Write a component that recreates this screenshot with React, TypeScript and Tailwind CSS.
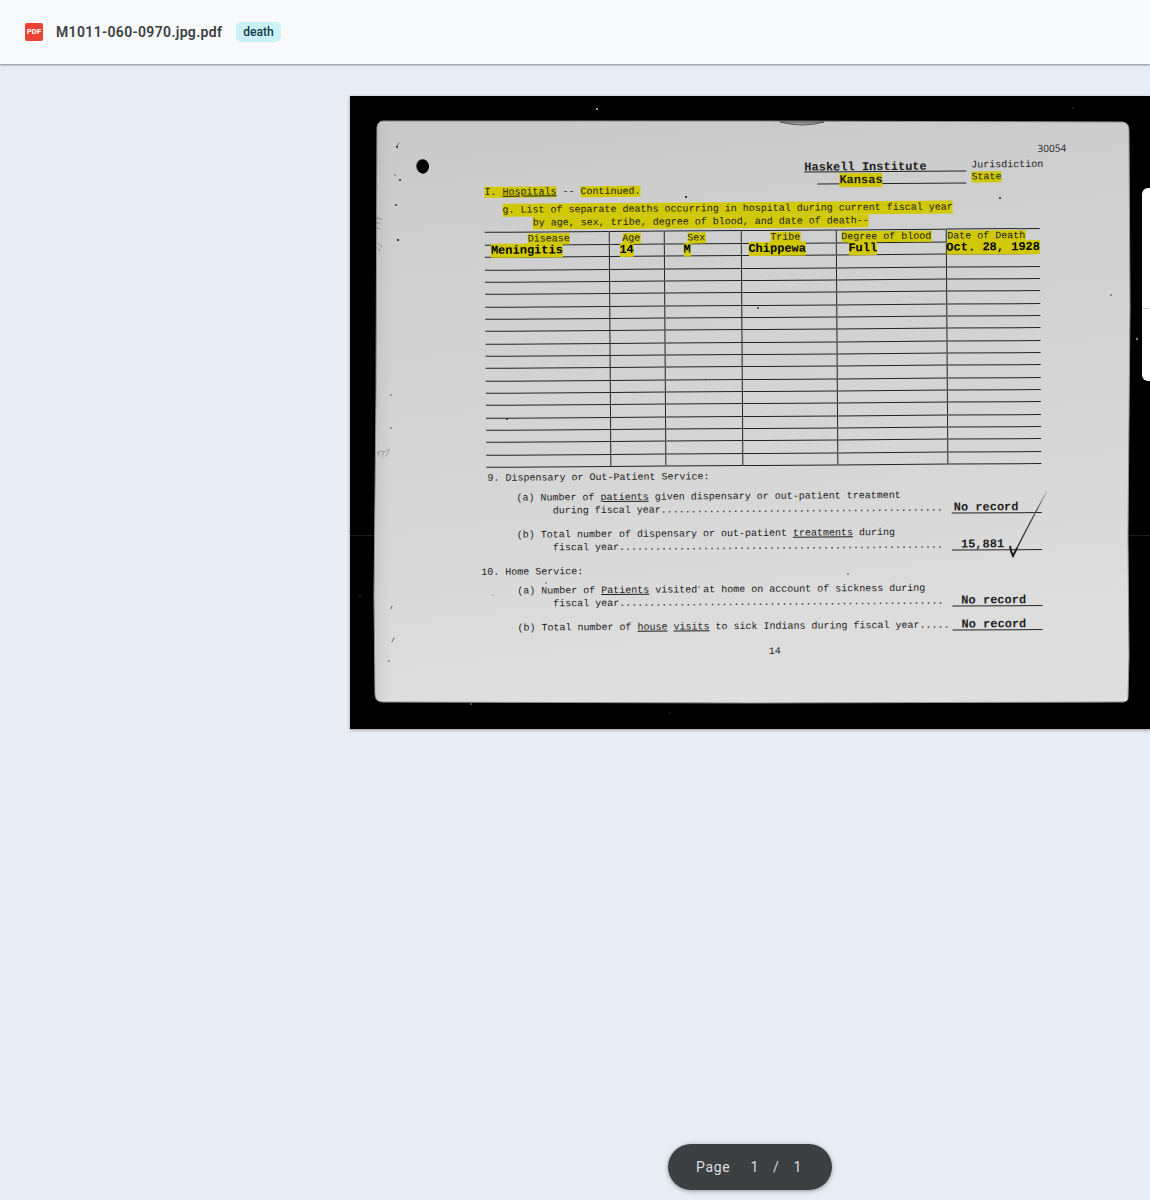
import type { ReactNode } from "react";

const columns = [
  { title: "Disease", value: "Meningitis", width: "w-[124px]", head: "pl-[43px]", cell: "pl-[6px]" },
  { title: "Age", value: "14", width: "w-[55px]", head: "pl-[13px]", cell: "pl-[10px]" },
  { title: "Sex", value: "M", width: "w-[77px]", head: "pl-[23px]", cell: "pl-[19px]" },
  { title: "Tribe", value: "Chippewa", width: "w-[95px]", head: "pl-[29px]", cell: "pl-[7px]" },
  { title: "Degree of blood", value: "Full", width: "w-[110px]", head: "pl-[5px]", cell: "pl-[12px]" },
  { title: "Date of Death", value: "Oct. 28, 1928", width: "w-[94px]", head: "pl-[1px]", cell: "pl-0" },
];

const emptyRows = Array.from({ length: 17 }, (_, i) => i);

const specks = [
  [247, 13, 1, "#ccc"], [47, 51, 1, "#222"], [45, 79, 0.7, "#444"], [46, 109, 1, "#333"], [50, 84, 1, "#222"],
  [48, 144, 1.1, "#111"], [336, 101, 1.1, "#111"], [408, 212, 0.9, "#333"], [761, 199, 0.9, "#666"],
  [787, 243, 1.2, "#888"], [157, 323, 1, "#222"], [41, 332, 0.8, "#444"], [41, 299, 0.8, "#555"],
  [650, 102, 1, "#222"], [498, 478, 0.8, "#333"], [196, 487, 0.7, "#333"], [39, 565, 0.8, "#444"], [121, 608, 0.8, "#aaa"],
  [10, 500, 0.6, "#777"], [349, 491, 0.7, "#444"], [723, 12, 0.7, "#555"], [320, 617, 0.8, "#333"], [143, 499, 0.7, "#888"],
  [356, 283, 0.6, "#555"],
] as const;

function Mark({ children }: { children: ReactNode }) {
  return <mark className="bg-[#d1c908] text-inherit">{children}</mark>;
}

function PaperBackdrop() {
  return (
    <svg className="absolute inset-0 h-full w-full" viewBox="0 0 800 633" preserveAspectRatio="none" aria-hidden="true">
      <defs>
        <linearGradient id="paper" x1="0" y1="0" x2="0.15" y2="1">
          <stop offset="0" stopColor="#c9c9c9" />
          <stop offset="0.3" stopColor="#d0d0d0" />
          <stop offset="0.65" stopColor="#d6d6d6" />
          <stop offset="1" stopColor="#dedede" />
        </linearGradient>
        <linearGradient id="leftEdge" x1="0" y1="0" x2="1" y2="0">
          <stop offset="0" stopColor="#8c8c8c" stopOpacity="0.2" />
          <stop offset="1" stopColor="#aaa" stopOpacity="0" />
        </linearGradient>
      </defs>
      <rect width="800" height="633" fill="#000" />
      <path d="M0 439.500H800" stroke="#1c1c1c" />
      <path d="M33 25 L400 25 L773 26 Q779 27 779 34 L780 210 L778 440 L779 560 L778 603 Q777 606 773 606 L400 607 L33 606 Q25 606 25 598 L24 500 L26 300 L27 31 Q28 25 33 25Z" fill="url(#paper)" stroke="#8d8d8d" strokeWidth="1" />
      <path d="M28 28H42V604H26L25 500L27 300Z" fill="url(#leftEdge)" />
      <path d="M430 26 Q452 32 474 26Z" fill="#9e9e9e" stroke="#444" strokeWidth="0.8" />
      <ellipse cx="71" cy="70" rx="5" ry="6.500" fill="#555" />
      <ellipse cx="73" cy="70.500" rx="6" ry="7.200" fill="#000" />
      <g fill="none" stroke="#333" strokeWidth="0.7" strokeLinecap="round">
        <path d="M27 122l4 1m-4 4h2m-2 5l3 1m-2 14l4 4m-4 1l2 3" opacity="0.6" />
        <path d="M27 357l4-2 3 1 5-3m-11 7l1-4m3 5l2-5m2 4l3-6" stroke="#888" />
        <path d="M47 50l2-3M41 513l1-3M42 546l2-4" />
      </g>
      {specks.map(([x, y, r, color]) => (
        <circle key={`${x}-${y}`} cx={x} cy={y} r={r} fill={color} />
      ))}
    </svg>
  );
}

function CheckStroke() {
  return (
    <svg className="pointer-events-none absolute inset-0 h-full w-full" viewBox="0 0 800 633" preserveAspectRatio="none" aria-hidden="true">
      <defs>
        <linearGradient id="pencil" x1="0" y1="1" x2="0" y2="0">
          <stop offset="0" stopColor="#1d1d1d" />
          <stop offset="0.7" stopColor="#555" />
          <stop offset="1" stopColor="#bbb" />
        </linearGradient>
      </defs>
      <path d="M660 450Q661 456 663 460Q679 428 697 395" fill="none" stroke="url(#pencil)" strokeWidth="1.300" />
      <path d="M660 450Q661 456 663 460L667 452" fill="none" stroke="#1a1a1a" strokeWidth="1.800" />
    </svg>
  );
}

function Answer({ children, pad }: { children: ReactNode; pad: string }) {
  return (
    <span className={`block h-[12px] w-[90px] shrink-0 border-b border-[#222] text-[12px] leading-[13px] font-bold text-[#222] ${pad}`}>
      {children}
    </span>
  );
}

function Item({ first, second, dots, answer, pad }: { first: ReactNode; second: string; dots: string; answer: string; pad: string }) {
  return (
    <div className="pl-[30px]">
      <p>{first}</p>
      <div className="flex justify-between">
        <p className="pl-9">
          {second}
          {dots}
        </p>
        <Answer pad={pad}>{answer}</Answer>
      </div>
    </div>
  );
}

function ScannedForm() {
  return (
    <article className="relative overflow-hidden bg-black shadow-[0_1px_3px_rgba(60,64,67,0.5)]">
      <PaperBackdrop />
      <div className="relative -rotate-[0.4deg] pt-[48px] pr-[109px] pb-[71px] pl-[136px] font-['Liberation_Mono',monospace] text-[10px] leading-[13px] whitespace-nowrap text-[#1c1c1c]">
        <p className="-mr-[27px] text-right font-['Open_Sans',sans-serif] leading-[12px]">30054</p>
        <div className="mt-[5px] -mr-[5px] flex justify-end gap-[5px] leading-[12px]">
          <div className="w-[162px] text-[12px] font-bold">
            <p className="h-[12px] border-b border-[#222] leading-[14px]">Haskell Institute</p>
            <p className="ml-[13px] h-[12px] border-b border-[#222] pl-[22px] leading-[16px]">
              <Mark>Kansas</Mark>
            </p>
          </div>
          <div className="w-[73px]">
            <p>Jurisdiction</p>
            <p>
              <Mark>State</Mark>
            </p>
          </div>
        </div>

        <h2 className="leading-[12px]">
          <Mark>
            I. <u>Hospitals</u>
          </Mark>{" "}
          -- <Mark>Continued.</Mark>
        </h2>
        <div className="mt-[5px] pl-[18px]">
          <p className="w-fit bg-[#d1c908]">g. List of separate deaths occurring in hospital during current fiscal year</p>
          <p className="ml-[30px] w-fit bg-[#d1c908]">by age, sex, tribe, degree of blood, and date of death--</p>
        </div>

        <table className="mt-[2px] h-[236px] w-full table-fixed border-collapse border-y border-[#222] text-left leading-[11px]">
          <thead>
            <tr className="h-[13px]">
              {columns.map((c) => (
                <th key={c.title} scope="col" className={`border-b border-l border-[#222] p-0 align-bottom font-normal first:border-l-0 ${c.width} ${c.head}`}>
                  <Mark>{c.title}</Mark>
                </th>
              ))}
            </tr>
          </thead>
          <tbody>
            <tr className="h-[12px] text-[12px] font-bold text-black">
              {columns.map((c) => (
                <td key={c.title} className={`border-b border-l border-[#222] p-0 first:border-l-0 ${c.cell}`}>
                  <Mark>{c.value}</Mark>
                </td>
              ))}
            </tr>
            {emptyRows.map((row) => (
              <tr key={row} className="h-[12px]">
                {columns.map((c) => (
                  <td key={c.title} className="border-b border-l border-[#222] p-0 first:border-l-0" />
                ))}
              </tr>
            ))}
          </tbody>
        </table>

        <h3 className="mt-[5px] pl-[1px] leading-[12px]">9. Dispensary or Out-Patient Service:</h3>
        <div className="mt-[7px]">
          <Item
            first={<>(a) Number of <u>patients</u> given dispensary or out-patient treatment</>}
            second="during fiscal year"
            dots="..............................................."
            answer="No record"
            pad="pl-[2px]"
          />
        </div>
        <div className="mt-[11px]">
          <Item
            first={<>(b) Total number of dispensary or out-patient <u>treatments</u> during</>}
            second="fiscal year"
            dots="......................................................"
            answer="15,881"
            pad="pl-[9px]"
          />
        </div>
        <h3 className="mt-[11px] -ml-[6px]">10. Home Service:</h3>
        <div className="mt-[6px]">
          <Item
            first={<>(a) Number of <u>Patients</u> visited at home on account of sickness during</>}
            second="fiscal year"
            dots="......................................................"
            answer="No record"
            pad="pl-[9px]"
          />
        </div>
        <div className="mt-[11px] flex justify-between pl-[30px]">
          <p>
            (b) Total number of <u>house</u> <u>visits</u> to sick Indians during fiscal year.....
          </p>
          <Answer pad="pl-[9px]">No record</Answer>
        </div>
        <p className="mt-[12px] pl-[281px]">14</p>
      </div>
      <CheckStroke />
    </article>
  );
}

export default function App() {
  return (
    <div className="flex min-h-screen flex-col overflow-x-hidden bg-[#e8ecf5] font-[Roboto,sans-serif]">
      <header className="relative z-10 flex h-16 items-center bg-[#f8f9fb] pl-[25px] shadow-[0_1px_2px_rgba(60,64,67,0.6)]">
        <span className="flex size-[18px] items-center justify-center rounded-[2px] bg-[#ea4335] text-[8px] leading-none font-bold text-white">PDF</span>
        <h1 className="ml-[13px] text-[14px] leading-5 font-semibold tracking-wide text-[#3c4043]">M1011-060-0970.jpg.pdf</h1>
        <span className="ml-[14px] rounded-[5px] bg-[#cbf0f8] px-[7px] text-[12px] leading-5 font-medium text-[#0d3c45]">death</span>
      </header>

      <main className="grid flex-1 grid-cols-[350px_1fr]">
        <div className="col-start-2 flex min-w-0 flex-col justify-between pt-8 pb-[10px]">
          <ScannedForm />
          <div className="flex h-[46px] items-center self-center rounded-full bg-[#3c4043] px-7 text-[14px] tracking-wider text-[#dadce0] shadow-[0_1px_4px_rgba(60,64,67,0.5)]">
            <span>Page</span>
            <span className="ml-5">1</span>
            <span className="mx-[14px]">/</span>
            <span className="pr-[2px]">1</span>
          </div>
        </div>
      </main>

      <aside className="absolute top-[188px] right-0 z-20 h-[193px] w-2 overflow-hidden rounded-l-md bg-white" aria-label="Search panel">
        <div className="h-[121px] border-b border-[#dadce0]" />
      </aside>
    </div>
  );
}
